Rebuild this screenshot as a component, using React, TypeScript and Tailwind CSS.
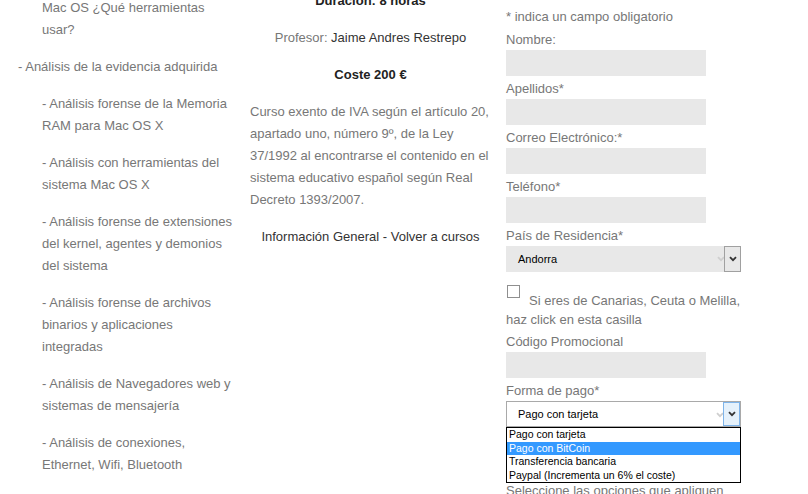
import { ReactNode } from "react";

const temario = [
  "- Análisis forense de la Memoria RAM para Mac OS X",
  "- Análisis con herramientas del sistema Mac OS X",
  "- Análisis forense de extensiones del kernel, agentes y demonios del sistema",
  "- Análisis forense de archivos binarios y aplicaciones integradas",
  "- Análisis de Navegadores web y sistemas de mensajería",
  "- Análisis de conexiones, Ethernet, Wifi, Bluetooth",
];

const pagos = [
  "Pago con tarjeta",
  "Pago con BitCoin",
  "Transferencia bancaria",
  "Paypal (Incrementa un 6% el coste)",
];

function Label({ children }: { children: ReactNode }) {
  return <div className="pt-[3px] leading-[20px]">{children}</div>;
}

function Field() {
  return <div className="h-[26px] w-[200px] bg-[#e8e8e8]" />;
}

function Arrow({ color = "#333" }: { color?: string }) {
  return (
    <svg width="8" height="6" viewBox="0 0 8 6">
      <path d="M1 1.2 L4 4.2 L7 1.2" fill="none" stroke={color} strokeWidth="1.8" />
    </svg>
  );
}

function Select({ value, focused, open }: { value: string; focused?: boolean; open?: boolean }) {
  return (
    <div
      className={`relative h-[26px] w-[235px] flex items-center ${
        focused ? "bg-white border border-[#a9a9a9] pl-[11px]" : "bg-[#e8e8e8] pl-[12px]"
      }`}
    >
      <span className="text-[11px] text-black">{value}</span>
      <span className="absolute right-[16px] top-[10px]">
        <Arrow color="#cfcfcf" />
      </span>
      <span
        className={`absolute right-0 top-0 h-full w-[17px] flex items-center justify-center border ${
          focused ? "bg-[#e5f1fb] border-[#7eb4ea]" : "bg-[#e8e8e8] border-[#a0a0a0]"
        }`}
      >
        <Arrow />
      </span>
      {open && (
        <div className="absolute left-[-1px] top-[25px] w-[235px] border border-black bg-white z-10 text-[10.5px] text-black">
          {pagos.map((p, i) => (
            <div
              key={p}
              className={`h-[13.5px] leading-[13.5px] pl-[2px] ${i === 1 ? "bg-[#3399ff] text-white" : ""}`}
            >
              {p}
            </div>
          ))}
        </div>
      )}
    </div>
  );
}

export default function App() {
  return (
    <div className="h-[494px] w-[808px] overflow-hidden bg-white font-['Liberation_Sans',Arial,sans-serif] text-[13px] text-[#777]">
      <div className="flex items-start">
        {/* temario */}
        <div className="w-[250px] shrink-0 -mt-[3px] pl-[18px] pr-[14px] leading-[22px]">
          <p className="pl-[24px] mb-[15px]">Mac OS ¿Qué herramientas usar?</p>
          <p className="mb-[15px]">- Análisis de la evidencia adquirida</p>
          {temario.map((t) => (
            <p key={t} className="pl-[24px] mb-[15px]">
              {t}
            </p>
          ))}
        </div>

        {/* info curso */}
        <div className="w-[241px] shrink-0 -mt-[10px] leading-[22px]">
          <p className="text-center font-bold text-[#222] mb-[15px]">Duración: 8 horas</p>
          <p className="text-center mb-[15px]">
            Profesor: <span className="text-[#333]">Jaime Andres Restrepo</span>
          </p>
          <p className="text-center font-bold text-[#222] mb-[15px]">Coste 200 €</p>
          <p className="mb-[15px]">
            Curso exento de IVA según el artículo 20, apartado uno, número 9º, de la Ley 37/1992 al
            encontrarse el contenido en el sistema educativo español según Real Decreto 1393/2007.
          </p>
          <p className="text-center text-[#333]">Información General - Volver a cursos</p>
        </div>

        {/* formulario */}
        <div className="ml-[15px] mt-[4px] w-[240px] shrink-0">
          <Label>* indica un campo obligatorio</Label>
          <Label>Nombre:</Label>
          <Field />
          <Label>Apellidos*</Label>
          <Field />
          <Label>Correo Electrónico:*</Label>
          <Field />
          <Label>Teléfono*</Label>
          <Field />
          <Label>País de Residencia*</Label>
          <Select value="Andorra" />

          <div className="pt-[13px]">
            <div className="flex">
              <span className="ml-[1px] h-[13px] w-[13px] shrink-0 border border-[#8f8f8f] bg-white" />
              <span className="ml-[9px] mt-[6px] leading-[20px]">Si eres de Canarias, Ceuta o Melilla,</span>
            </div>
            <div className="leading-[18px]">haz click en esta casilla</div>
          </div>

          <Label>Código Promocional</Label>
          <Field />
          <Label>Forma de pago*</Label>
          <Select value="Pago con tarjeta" focused open />
          <div className="mt-[51px] pt-[3px] leading-[20px] whitespace-nowrap">
            Seleccione las opciones que apliquen
          </div>
        </div>
      </div>
    </div>
  );
}
